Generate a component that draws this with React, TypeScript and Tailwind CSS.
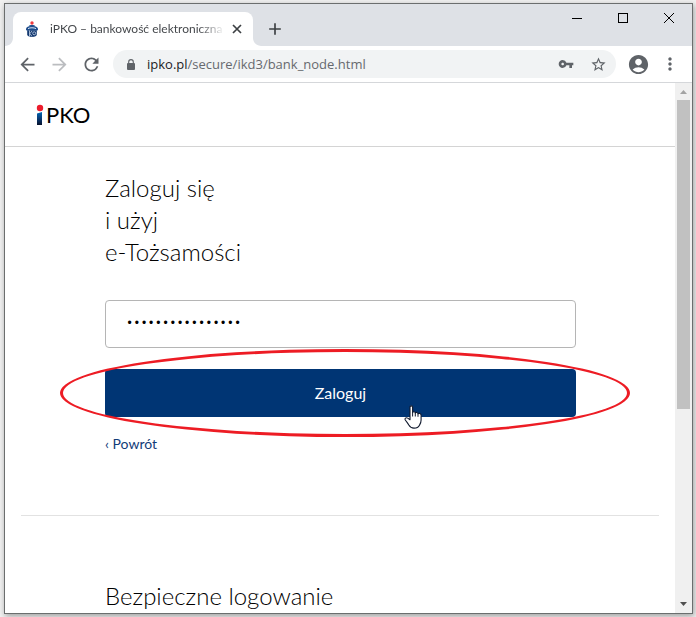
import type { ReactNode } from 'react';
import {
  MdAccountCircle,
  MdAdd,
  MdArrowBack,
  MdArrowForward,
  MdMoreVert,
  MdRefresh,
  MdStarBorder,
  MdVpnKey,
} from 'react-icons/md';

interface IconButtonProps {
  label: string;
  className?: string;
  children: ReactNode;
}

function IconButton({ label, className = 'h-7 w-8 text-[#5f6368]', children }: IconButtonProps) {
  return (
    <button type="button" aria-label={label} className={`flex shrink-0 items-center justify-center ${className}`}>
      {children}
    </button>
  );
}

function Favicon() {
  return (
    <svg viewBox="0 0 14 18" className="h-[18px] w-[14px] shrink-0" aria-hidden="true">
      <circle cx="7" cy="3" r="1.7" fill="#ee3a3f" />
      <path d="M3.500 6.400C4 5.300 5.400 5 7 5s3 .300 3.500 1.400z" fill="#1b4f8f" />
      <path d="M1 9.200C1 7 3.600 6 7 6s6 1 6 3.200l-.800 1.600H1.800z" fill="#1d4c8c" />
      <path d="M3 8.600c2.200-1.100 5.800-1.100 8 0" stroke="#dbe6f3" strokeWidth="1" fill="none" />
      <path d="M2.200 10.400h9.600v4.200c0 1.400-1.800 2.400-4.800 2.400s-4.800-1-4.800-2.400z" fill="#12376f" />
      <path d="M4.500 10.500v6M5 13.500l2-2.500M5 13.500l2 3" stroke="#c6d5e8" strokeWidth=".8" fill="none" />
      <circle cx="9.200" cy="13.300" r="1.500" stroke="#c6d5e8" strokeWidth=".8" fill="none" />
    </svg>
  );
}

function TabFlare({ className }: { className: string }) {
  return (
    <svg viewBox="0 0 8 8" className={`absolute bottom-0 size-2 ${className}`} aria-hidden="true">
      <path d="M8 0v8H0c4.400 0 8-3.600 8-8z" fill="#fff" />
    </svg>
  );
}

function TabStrip() {
  return (
    <div className="flex h-[42px] shrink-0 items-end bg-[#dee1e6] pl-2">
      <div className="relative flex h-[34px] w-60 items-center rounded-t-lg bg-white pr-2 pl-3">
        <TabFlare className="-left-2" />
        <TabFlare className="-right-2 -scale-x-100" />
        <Favicon />
        <span className="ml-[11px] flex-1 mask-r-from-85% font-['Lato',sans-serif] text-[12px] leading-4 whitespace-nowrap text-[#45484c]">
          iPKO – bankowość elektroniczna
        </span>
        <IconButton label="Zamknij kartę" className="ml-1 size-4 text-[#3c4043]">
          <svg viewBox="0 0 10 10" className="size-2.5" fill="none" stroke="currentColor" strokeWidth="1.700">
            <path d="M1 1l8 8M9 1L1 9" />
          </svg>
        </IconButton>
      </div>
      <IconButton label="Nowa karta" className="ml-2 h-[34px] w-7 text-[#3c4043]">
        <MdAdd size={20} />
      </IconButton>
      <div className="ml-auto flex self-start text-black">
        <IconButton label="Minimalizuj" className="h-7 w-[46px]">
          <svg viewBox="0 0 10 10" className="size-2.5" shapeRendering="crispEdges">
            <path d="M0 5h10v1H0z" />
          </svg>
        </IconButton>
        <IconButton label="Maksymalizuj" className="h-7 w-[46px]">
          <svg viewBox="0 0 10 10" className="size-2.5" shapeRendering="crispEdges">
            <path d="M0 0h10v10H0zM1 1v8h8V1z" fillRule="evenodd" />
          </svg>
        </IconButton>
        <IconButton label="Zamknij" className="h-7 w-[46px]">
          <svg viewBox="0 0 10 10" className="size-2.5" fill="none" stroke="currentColor">
            <path d="M0 0l10 10M10 0L0 10" />
          </svg>
        </IconButton>
      </div>
    </div>
  );
}

function Toolbar() {
  return (
    <div className="flex h-[37px] shrink-0 items-center border-b border-[#d5d7da] bg-white px-1.5">
      <IconButton label="Wstecz">
        <MdArrowBack size={21} />
      </IconButton>
      <IconButton label="Dalej" className="h-7 w-8 text-[#bbbdc0]">
        <MdArrowForward size={21} />
      </IconButton>
      <IconButton label="Odśwież">
        <MdRefresh size={21} />
      </IconButton>
      <div className="mx-1.5 flex h-7 min-w-0 flex-1 items-center rounded-full bg-[#f1f3f4] pr-0.5 pl-[14px] font-['Open_Sans','Noto_Sans',sans-serif]">
        <svg viewBox="0 0 8 11" className="h-[11px] w-2 shrink-0" aria-hidden="true">
          <path d="M1.700 5V2.900a2.300 2.300 0 0 1 4.600 0V5" fill="none" stroke="#5f6368" strokeWidth="1.100" />
          <rect y="4" width="8" height="7" rx="1" fill="#5f6368" />
        </svg>
        <div className="ml-3 flex-1 truncate text-[13px] leading-5 text-[#66696e]">
          <span className="text-[#202124]">ipko.pl</span>/secure/ikd3/bank_node.html
        </div>
        <IconButton label="Hasła">
          <MdVpnKey size={16} />
        </IconButton>
        <IconButton label="Dodaj do zakładek">
          <MdStarBorder size={17} />
        </IconButton>
      </div>
      <IconButton label="Profil">
        <MdAccountCircle size={23} />
      </IconButton>
      <IconButton label="Menu">
        <MdMoreVert size={20} />
      </IconButton>
    </div>
  );
}

function Scrollbar() {
  return (
    <div className="flex w-[17px] shrink-0 flex-col items-center bg-[#f0f0f0]" aria-hidden="true">
      <svg viewBox="0 0 17 17" className="size-[17px] shrink-0">
        <path d="M5 11h7L8.500 7z" fill="#a3a3a3" />
      </svg>
      <div className="h-[309px] w-[13px] bg-[#c1c1c1]" />
      <svg viewBox="0 0 17 17" className="mt-auto size-[17px] shrink-0">
        <path d="M5 6h7l-3.500 4z" fill="#505050" />
      </svg>
    </div>
  );
}

function Logo() {
  return (
    <a href="#" aria-label="iPKO" className="flex items-center text-black">
      <svg viewBox="0 0 8 22" className="h-[22px] w-2" aria-hidden="true">
        <defs>
          <linearGradient id="stem" x1="0" y1="0" x2="0" y2="1">
            <stop offset="0" stopColor="#0068b3" />
            <stop offset="0.500" stopColor="#083b77" />
            <stop offset="1" stopColor="#07112b" />
          </linearGradient>
        </defs>
        <circle cx="4" cy="4" r="3.200" fill="#ec1c2c" />
        <path d="M1 9.500L6 8v13H1z" fill="url(#stem)" />
      </svg>
      <span className="ml-0.5 text-[22px] leading-7">PKO</span>
    </a>
  );
}

function HandCursor() {
  return (
    <svg viewBox="0 0 18 24" className="absolute top-9 left-[299px] h-6 w-[18px]" aria-hidden="true">
      <path
        d="M6 2.200C6 .400 8.600.400 8.600 2.200V7.500C9 6.400 11.200 6.500 11.300 8 12 7 13.900 7.300 14 8.800c1-.800 3.100-.300 3.100 1.500V15c0 3-1.300 4.500-1.800 5.500-.800 1.700-2.200 2.600-5.300 2.600-3 0-4.300-1.600-5.200-3.200-1-1.700-2.300-3-3.500-4.900-.900-1.500.700-3 2.400-1.900L6 14.700z"
        fill="#fff"
        stroke="#111a2e"
        strokeWidth="1.100"
        strokeLinejoin="round"
      />
      <path d="M8.600 7.500v4M11.300 8v3.500M14 8.800v3" stroke="#111a2e" strokeWidth="1" fill="none" />
    </svg>
  );
}

function LoginForm() {
  return (
    <form className="pt-[25px] pr-[83px] pl-[84px]" onSubmit={(e) => e.preventDefault()}>
      <h1 className="text-2xl leading-8 font-light">
        Zaloguj się
        <br />i użyj
        <br />
        e-Tożsamości
      </h1>
      <input
        type="password"
        aria-label="Hasło"
        defaultValue="0123456789abcdef"
        className="mt-8 block h-12 w-full rounded border border-[#b5b5b5] bg-white px-5 font-['Liberation_Mono',monospace] text-[12px] text-black outline-none"
      />
      <div className="relative mt-[21px]">
        <button type="submit" className="block h-12 w-full rounded bg-[#003574] text-base text-white">
          Zaloguj
        </button>
        <div className="pointer-events-none absolute -top-5 -right-[54px] -bottom-5 -left-[45px] rounded-[50%] border-3 border-[#ed1c24]" />
        <HandCursor />
      </div>
      <a href="#" className="mt-4 inline-block text-sm leading-[22px] text-[#123c78]">
        ‹ Powrót
      </a>
    </form>
  );
}

export default function App() {
  return (
    <div className="flex h-screen flex-col overflow-hidden bg-[#f1f1f1] py-[3px] pr-[3px] pl-1">
      <div className="flex min-h-0 flex-1 flex-col border border-[#6b6e6e] bg-white shadow-[1px_2px_6px_rgba(0,0,0,0.35)]">
        <TabStrip />
        <Toolbar />
        <div className="flex min-h-0 flex-1">
          <div className="min-w-0 flex-1 overflow-hidden font-['Lato',sans-serif] text-black">
            <header className="flex h-16 items-center border-b border-[#d4d4d4] px-[31px]">
              <Logo />
            </header>
            <main className="px-4">
              <LoginForm />
              <section className="mt-[60px] border-t border-[#e2e2e2] px-[84px] pt-16">
                <h2 className="text-2xl leading-8 font-light">Bezpieczne logowanie</h2>
              </section>
            </main>
          </div>
          <Scrollbar />
        </div>
      </div>
    </div>
  );
}
